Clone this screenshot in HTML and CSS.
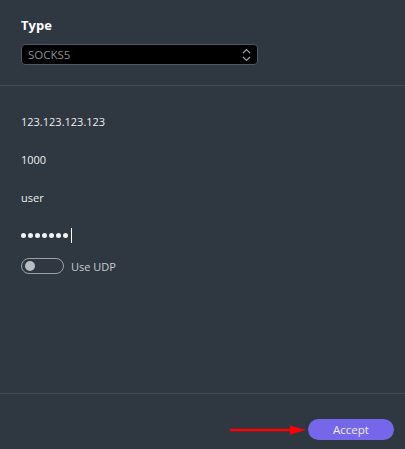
FILE: index.html
```html
<!DOCTYPE html>
<html>
<head>
<meta charset="utf-8">
<link rel="stylesheet" href="styles.css">
</head>
<body>
<div class="dialog">
  <section class="head">
    <div class="label">Type</div>
    <div class="select">
      <span class="select-value">SOCKS5</span>
      <svg class="chev" width="9" height="14" viewBox="0 0 9 14"><path d="M1 5 L4.5 1.5 L8 5 M1 9 L4.5 12.5 L8 9" fill="none" stroke="#9aa0a8" stroke-width="1.2"/></svg>
    </div>
  </section>
  <section class="fields">
    <div class="row">123.123.123.123</div>
    <div class="row">1000</div>
    <div class="row">user</div>
    <div class="row pw"><span class="dot"></span><span class="dot"></span><span class="dot"></span><span class="dot"></span><span class="dot"></span><span class="dot"></span><span class="dot"></span><span class="caret"></span></div>
    <div class="toggle-row">
      <span class="toggle"><span class="knob"></span></span>
      <span class="toggle-label">Use UDP</span>
    </div>
  </section>
  <footer class="foot">
    <svg class="arrow" width="78" height="12" viewBox="0 0 78 12"><line x1="0" y1="6" x2="62" y2="6" stroke="#ff0000" stroke-width="2.5"/><polygon points="60,1.5 76,6 60,10.5" fill="#ff0000"/></svg>
    <button class="accept">Accept</button>
  </footer>
</div>
</body>
</html>
```

FILE: styles.css
```css
html, body {
  margin: 0;
  padding: 0;
  background: #2f3741;
}
body {
  font-family: "Open Sans", "Noto Sans", sans-serif;
  color: #e9ebee;
}
.dialog {
  height: 449px;
  display: flex;
  flex-direction: column;
}
.head {
  padding: 17px 147px 20px 21px;
  border-bottom: 1px solid #3f4b57;
}
.label {
  font-size: 13px;
  font-weight: 700;
  line-height: 16px;
  color: #ffffff;
}
.select {
  margin-top: 11px;
  height: 19px;
  background: #000000;
  border: 1px solid #4a5868;
  border-radius: 4px;
  display: flex;
  align-items: center;
  justify-content: space-between;
  padding: 0 6px 0 6px;
}
.select-value {
  font-size: 11.5px;
  color: #8b9097;
}
.chev {
  display: block;
}
.fields {
  flex: 1;
  padding: 16px 21px 0 21px;
  border-bottom: 1px solid #3f4b57;
}
.row {
  height: 38px;
  display: flex;
  align-items: center;
  font-size: 11px;
  color: #eceef0;
}
.pw {
  gap: 2px;
}
.dot {
  width: 5px;
  height: 5px;
  border-radius: 50%;
  background: #f2f3f5;
}
.caret {
  width: 1px;
  height: 15px;
  background: #ffffff;
  margin-left: 1px;
}
.toggle-row {
  display: flex;
  align-items: center;
  gap: 7px;
  margin-top: 4px;
}
.toggle {
  width: 38px;
  height: 14px;
  border: 1px solid #9ba1a8;
  border-radius: 9px;
  display: flex;
  align-items: center;
  padding-left: 3px;
  box-sizing: content-box;
}
.knob {
  width: 10px;
  height: 10px;
  border-radius: 50%;
  background: #b9bdc2;
}
.toggle-label {
  font-size: 11px;
  color: #c9cdd2;
}
.foot {
  height: 55px;
  position: relative;
  display: flex;
  justify-content: flex-end;
  align-items: flex-start;
  padding: 25px 11px 0 0;
  box-sizing: border-box;
}
.accept {
  width: 86px;
  height: 21px;
  border: none;
  border-radius: 11px;
  background: #7666ea;
  color: #f1eefe;
  font-family: "Open Sans", "Noto Sans", sans-serif;
  font-size: 11.5px;
  padding: 0;
}
.arrow {
  position: absolute;
  left: 230px;
  top: 30px;
}
```
